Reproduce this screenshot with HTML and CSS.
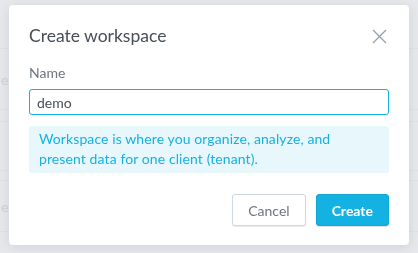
FILE: index.html
```html
<!DOCTYPE html>
<html lang="en">
<head>
    <meta charset="UTF-8">
    <meta name="viewport" content="width=device-width, initial-scale=1.0">
    <title>Create workspace</title>
    <link rel="stylesheet" href="styles.css">
</head>
<body>
    <!-- page behind the modal -->
    <div class="backdrop">
        <div class="row" style="height: 49px;"></div>
        <div class="row" style="height: 61px;"><span class="ghost">e</span></div>
        <div class="row" style="height: 12px;"></div>
        <div class="row" style="height: 49px;"></div>
        <div class="row" style="height: 10px;"></div>
        <div class="row" style="height: 51px;"><span class="ghost">e</span></div>
    </div>

    <div class="overlay">
        <div class="dialog">
            <div class="dialog-header">
                <h2>Create workspace</h2>
                <button class="close" aria-label="Close">
                    <svg width="15" height="15" viewBox="0 0 15 15">
                        <path d="M1 1 L14 14 M14 1 L1 14" stroke="#94a1ad" stroke-width="1.3" fill="none"/>
                    </svg>
                </button>
            </div>
            <div class="input-group">
                <label for="ws-name">Name</label>
                <input type="text" id="ws-name" value="demo">
            </div>
            <div class="info">
                Workspace is where you organize, analyze, and<br>
                present data for one client (tenant).
            </div>
            <div class="actions">
                <button class="btn btn-secondary">Cancel</button>
                <button class="btn btn-primary">Create</button>
            </div>
        </div>
    </div>
</body>
</html>
```

FILE: styles.css
```css
body {
    font-family: Lato, "Open Sans", sans-serif;
    margin: 0;
    padding: 0;
    background-color: #e7e8eb;
    overflow: hidden;
}
.backdrop {
    display: flex;
    flex-direction: column;
}
.row {
    border-bottom: 1px solid #e0e1e5;
    box-sizing: border-box;
    display: flex;
    align-items: center;
}
.ghost {
    color: #d0d3d8;
    font-size: 14px;
    margin-left: 1px;
}
.overlay {
    position: fixed;
    top: 0;
    left: 0;
    right: 0;
    bottom: 0;
    padding: 5px 9px;
    display: flex;
    align-items: flex-start;
}
.dialog {
    width: 400px;
    box-sizing: border-box;
    background: white;
    padding: 20px 20px 19px;
    border-radius: 4px;
    box-shadow: 0 2px 12px rgba(20, 56, 93, 0.12);
}
.dialog-header {
    display: flex;
    justify-content: space-between;
    align-items: center;
    margin-bottom: 17px;
}
.dialog-header h2 {
    margin: 0;
    font-size: 17.5px;
    font-weight: normal;
    color: #464e56;
    line-height: 22px;
}
.close {
    background: none;
    border: none;
    padding: 0;
    margin-right: 2px;
    width: 15px;
    height: 15px;
    display: flex;
}
.input-group label {
    display: block;
    font-size: 14px;
    color: #6d7680;
    line-height: 17px;
    margin-bottom: 8px;
}
.input-group input {
    width: 100%;
    box-sizing: border-box;
    height: 26px;
    padding: 0 7px;
    border: 1px solid #14b2e2;
    border-radius: 3px;
    font-family: inherit;
    font-size: 14px;
    color: #464e56;
    outline: none;
}
.info {
    margin-top: 11px;
    padding: 3px 10px 4px;
    background-color: #e8f7fc;
    border-radius: 3px;
    color: #14b2e2;
    font-size: 14px;
    line-height: 20px;
    letter-spacing: 0.1px;
}
.actions {
    display: flex;
    justify-content: flex-end;
    gap: 10px;
    margin-top: 21px;
}
.btn {
    height: 32px;
    padding: 0 15px;
    border-radius: 3px;
    font-family: inherit;
    font-size: 14px;
    cursor: pointer;
}
.btn-secondary {
    background: white;
    border: 1px solid #ccd8e2;
    color: #6d7680;
    box-shadow: 0 1px 1px rgba(20, 56, 93, 0.1);
}
.btn-primary {
    background-color: #14b2e2;
    border: 1px solid #13a7d4;
    color: white;
    font-weight: bold;
    box-shadow: 0 1px 1px rgba(20, 56, 93, 0.15);
}
```
